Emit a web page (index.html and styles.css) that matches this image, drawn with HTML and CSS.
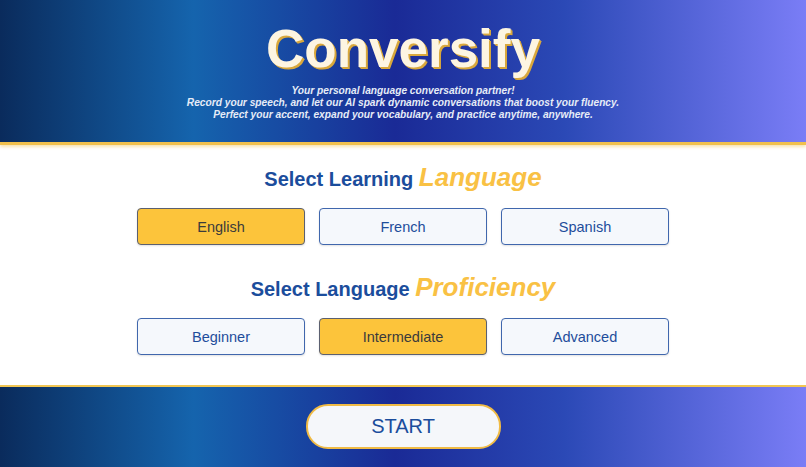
FILE: index.html
```html
<!DOCTYPE html>
<html lang="en">
<head>
<meta charset="UTF-8">
<title>Conversify</title>
<link rel="stylesheet" href="styles.css">
</head>
<body>
<header class="hero">
  <h1 class="logo">Conversify</h1>
  <p class="tagline">
    Your personal language conversation partner!<br>
    Record your speech, and let our AI spark dynamic conversations that boost your fluency.<br>
    Perfect your accent, expand your vocabulary, and practice anytime, anywhere.
  </p>
</header>

<main class="setup">
  <h2 class="section-title">Select Learning <span class="accent">Language</span></h2>
  <div class="options" data-group="language">
    <button class="option selected" onclick="pick(this)">English</button>
    <button class="option" onclick="pick(this)">French</button>
    <button class="option" onclick="pick(this)">Spanish</button>
  </div>

  <h2 class="section-title">Select Language <span class="accent">Proficiency</span></h2>
  <div class="options" data-group="level">
    <button class="option" onclick="pick(this)">Beginner</button>
    <button class="option selected" onclick="pick(this)">Intermediate</button>
    <button class="option" onclick="pick(this)">Advanced</button>
  </div>
</main>

<footer class="bottom-bar">
  <button class="start-btn">START</button>
</footer>

<script>
  function pick(btn) {
    btn.parentNode.querySelectorAll('.option').forEach(function (b) {
      b.classList.remove('selected');
    });
    btn.classList.add('selected');
  }
</script>
</body>
</html>
```

FILE: styles.css
```css
body {
  margin: 0;
  font-family: "Liberation Sans", Arial, sans-serif;
  background: #fff;
}

.hero,
.bottom-bar {
  background: linear-gradient(90deg, #0a2b5c 0%, #1564ad 24%, #1a2a96 49%, #2b49b6 70%, #7a7df6 100%);
}

.hero {
  padding: 22px 0 21px;
  text-align: center;
  border-bottom: 3px solid #f1c04c;
  box-shadow: 0 2px 3px rgba(240, 192, 80, 0.45);
  position: relative;
}
.logo {
  margin: 0;
  font-size: 53px;
  line-height: 53px;
  font-weight: bold;
  color: #fdf5e2;
  text-shadow: 2px 2px 0 #d9a83c, 1px 1px 0 #e9c064;
}
.tagline {
  margin: 10px 0 0;
  font-size: 10.2px;
  line-height: 12px;
  font-weight: bold;
  font-style: italic;
  color: #e6ecf7;
}

.setup {
  padding: 17px 0 30px;
  text-align: center;
}
.section-title {
  margin: 0;
  font-size: 20px;
  line-height: 30px;
  font-weight: bold;
  color: #1b4d9c;
}
.accent {
  font-size: 26px;
  font-style: italic;
  color: #f9c144;
}
.options {
  display: flex;
  justify-content: center;
  gap: 14px;
  margin: 14px 0 27px;
}
.options:last-child { margin-bottom: 0; }
.option {
  width: 168px;
  height: 37px;
  font-family: inherit;
  font-size: 14.5px;
  color: #1e4d9b;
  background: #f5f8fc;
  border: 1.5px solid #4067ad;
  border-radius: 4px;
  box-shadow: 0 1px 2px rgba(0, 0, 0, 0.12);
  cursor: pointer;
}
.option.selected {
  background: #fcc43b;
  border-color: #5b6070;
  color: #3b3b3b;
}

.bottom-bar {
  border-top: 2px solid #f1c653;
  padding: 17px 0 18px;
  display: flex;
  justify-content: center;
}
.start-btn {
  width: 195px;
  height: 45px;
  font-family: inherit;
  font-size: 20px;
  color: #1b4d9c;
  background: #f5f7fa;
  border: 2px solid #f0bb45;
  border-radius: 22px;
  cursor: pointer;
}
```
